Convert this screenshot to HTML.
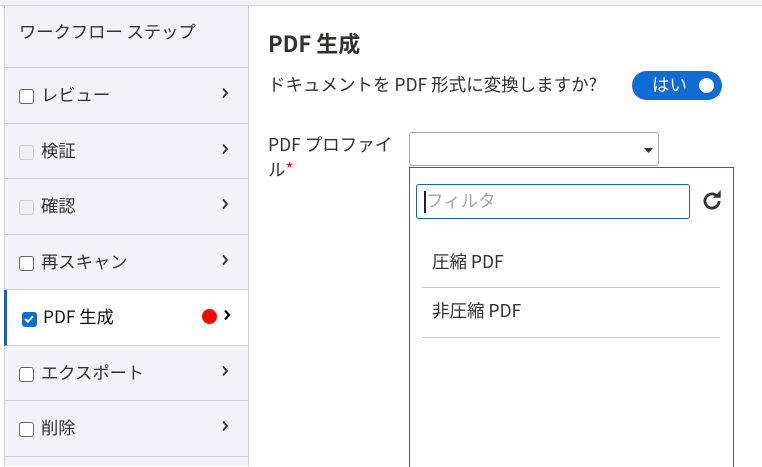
<!DOCTYPE html>
<html><head><meta charset="utf-8"><style>
*{box-sizing:border-box;margin:0;padding:0}
body{width:762px;height:460px;overflow:hidden;background:#fff;font-family:"Noto Sans CJK JP","Liberation Sans",sans-serif;color:#323130;position:relative}
.top{position:absolute;left:0;top:0;width:762px;height:6px;background:#f3f2f7;border-bottom:1px solid #d6d6d6}
.side{position:absolute;left:4px;top:6px;width:245px;height:460px;background:#f3f2f7;border-left:1px solid #d0d0d0;border-right:1px solid #d0d0d0}
.hd{height:62px;border-bottom:1px solid #d0d0d0;font-size:17.3px;line-height:24px;padding:13px 0 0 14px}
.row{height:55.5px;border-bottom:1px solid #d0d0d0;position:relative;font-size:17.3px;line-height:24px;padding:14px 0 0 36px}
.cb{position:absolute;left:14px;top:21px;width:15px;height:15px;border:1.5px solid #666;border-radius:3px;background:#fff}
.cb.dis{border-color:#ccc;background:#f0f0f0}
.chev{position:absolute;left:216px;top:19px}
.act{background:#fff;margin-left:-1px;border-left:3px solid #1d5fb0;padding-left:36px}
.act .cb{background:#0f6cd4;border-color:#0f6cd4;left:15px;top:22px}
.dot{position:absolute;left:195px;top:19px;width:15px;height:15px;border-radius:50%;background:#f00}
.abs{position:absolute}
.t{font-size:17.5px;line-height:24px}
</style></head><body>
<div class="top"></div>
<div class="side">
<div class="hd">ワークフロー ステップ</div>
<div class="row"><span class="cb"></span>レビュー<svg class="chev" width="8" height="12" viewBox="0 0 8 12"><path d="M2 1.5l4 4.5-4 4.5" stroke="#333" stroke-width="1.8" fill="none"/></svg></div>
<div class="row"><span class="cb dis"></span>検証<svg class="chev" width="8" height="12" viewBox="0 0 8 12"><path d="M2 1.5l4 4.5-4 4.5" stroke="#333" stroke-width="1.8" fill="none"/></svg></div>
<div class="row"><span class="cb dis"></span>確認<svg class="chev" width="8" height="12" viewBox="0 0 8 12"><path d="M2 1.5l4 4.5-4 4.5" stroke="#333" stroke-width="1.8" fill="none"/></svg></div>
<div class="row"><span class="cb"></span>再スキャン<svg class="chev" width="8" height="12" viewBox="0 0 8 12"><path d="M2 1.5l4 4.5-4 4.5" stroke="#333" stroke-width="1.8" fill="none"/></svg></div>
<div class="row act"><span class="cb"><svg width="12" height="12" viewBox="0 0 11 11" style="position:absolute;left:0;top:0"><path d="M2 5.5l2.5 2.5 4.5-5" stroke="#fff" stroke-width="1.8" fill="none"/></svg></span><span style="color:#111">PDF 生成</span><span class="dot"></span><svg class="chev" width="8" height="12" viewBox="0 0 8 12"><path d="M2 1.5l4 4.5-4 4.5" stroke="#000" stroke-width="2.2" fill="none"/></svg></div>
<div class="row"><span class="cb"></span>エクスポート<svg class="chev" width="8" height="12" viewBox="0 0 8 12"><path d="M2 1.5l4 4.5-4 4.5" stroke="#333" stroke-width="1.8" fill="none"/></svg></div>
<div class="row"><span class="cb"></span>削除<svg class="chev" width="8" height="12" viewBox="0 0 8 12"><path d="M2 1.5l4 4.5-4 4.5" stroke="#333" stroke-width="1.8" fill="none"/></svg></div>
</div>
<div class="abs" style="left:268px;top:28px;font-size:22px;line-height:30px;font-weight:bold">PDF 生成</div>
<div class="abs t" style="left:268px;top:73px">ドキュメントを PDF 形式に変換しますか?</div>
<div class="abs t" style="left:632px;top:71px;width:90px;height:29px;border-radius:15px;background:#0f6cd4;color:#fff;padding:2px 0 0 20px">はい<span style="position:absolute;right:8px;top:7px;width:15px;height:15px;border-radius:50%;background:#fff"></span></div>
<div class="abs t" style="left:268px;top:132px;line-height:25px">PDF プロファイ<br>ル<span style="color:#c4262e">*</span></div>
<div class="abs" style="left:409px;top:132px;width:250px;height:34px;border:1px solid #aaa;border-radius:3px"><svg class="abs" style="left:234px;top:15px" width="9" height="5"><path d="M0 0h9L4.5 5z" fill="#333"/></svg></div>
<div class="abs" style="left:409px;top:167px;width:325px;height:300px;border:1px solid #1d5fb0;border-bottom:none">
<div class="abs t" style="left:6px;top:16px;width:274px;height:35px;border:1px solid #1d5fb0;border-radius:3px;color:#a6a6a6;padding:4px 0 0 9px"><span style="position:absolute;left:7px;top:6px;width:2px;height:22px;background:#222"></span>フィルタ</div>
<svg class="abs" style="left:290px;top:21px" width="24" height="24" viewBox="0 0 22 22"><path d="M17.5 11a6.5 6.5 0 1 1-2-4.7" stroke="#333" stroke-width="2.6" fill="none"/><path d="M19 1v7h-7z" fill="#333"/></svg>
<div class="abs t" style="left:22px;top:82px">圧縮 PDF</div>
<div class="abs" style="left:12px;top:119px;width:298px;height:1px;background:#ccc"></div>
<div class="abs t" style="left:22px;top:131px">非圧縮 PDF</div>
<div class="abs" style="left:12px;top:169px;width:298px;height:1px;background:#ccc"></div>
</div>
</body></html>
